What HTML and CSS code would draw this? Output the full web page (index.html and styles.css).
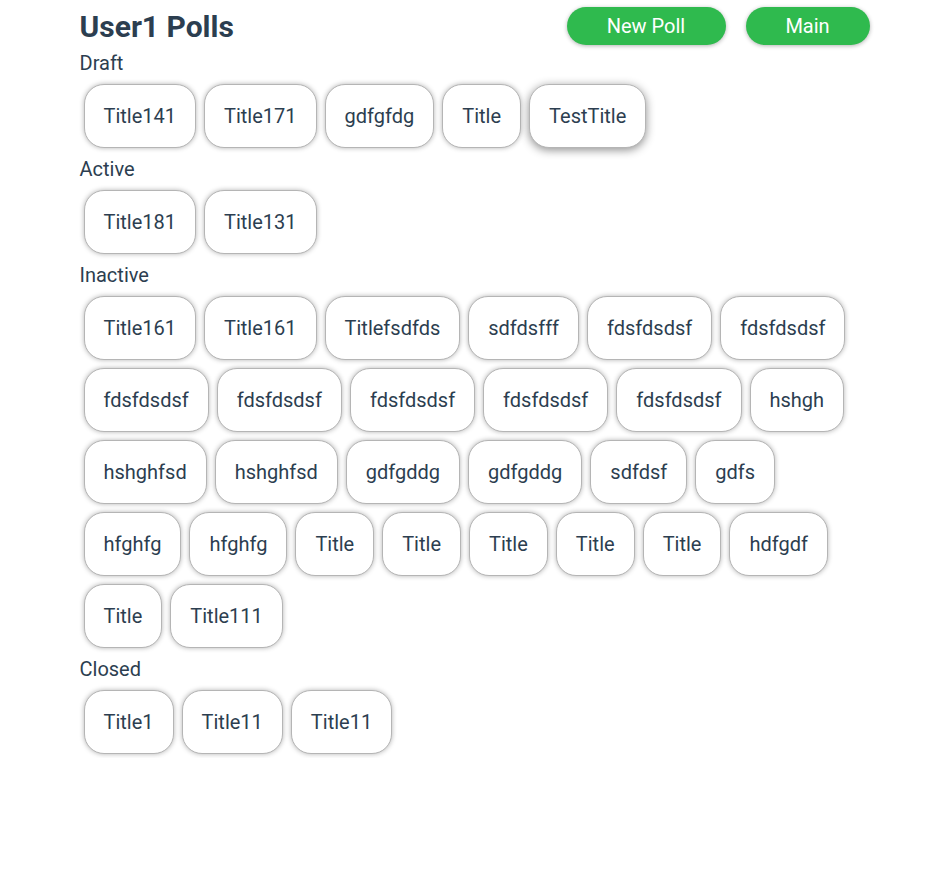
FILE: index.html
```html
<!DOCTYPE html>
<html>
<head>
<meta charset="utf-8">
<link rel="stylesheet" href="styles.css">
</head>
<body>
<div class="container">
  <header class="header">
    <h1 class="title">User1 Polls</h1>
    <div class="actions">
      <button class="btn btn-new">New Poll</button>
      <button class="btn btn-main">Main</button>
    </div>
  </header>

  <section class="group">
    <div class="label">Draft</div>
    <div class="cards">
      <div class="card">Title141</div>
      <div class="card">Title171</div>
      <div class="card">gdfgfdg</div>
      <div class="card">Title</div>
      <div class="card hover">TestTitle</div>
    </div>
  </section>

  <section class="group">
    <div class="label">Active</div>
    <div class="cards">
      <div class="card">Title181</div>
      <div class="card">Title131</div>
    </div>
  </section>

  <section class="group">
    <div class="label">Inactive</div>
    <div class="cards">
      <div class="card">Title161</div>
      <div class="card">Title161</div>
      <div class="card">Titlefsdfds</div>
      <div class="card">sdfdsfff</div>
      <div class="card">fdsfdsdsf</div>
      <div class="card">fdsfdsdsf</div>
      <div class="card">fdsfdsdsf</div>
      <div class="card">fdsfdsdsf</div>
      <div class="card">fdsfdsdsf</div>
      <div class="card">fdsfdsdsf</div>
      <div class="card">fdsfdsdsf</div>
      <div class="card">hshgh</div>
      <div class="card">hshghfsd</div>
      <div class="card">hshghfsd</div>
      <div class="card">gdfgddg</div>
      <div class="card">gdfgddg</div>
      <div class="card">sdfdsf</div>
      <div class="card">gdfs</div>
      <div class="card">hfghfg</div>
      <div class="card">hfghfg</div>
      <div class="card">Title</div>
      <div class="card">Title</div>
      <div class="card">Title</div>
      <div class="card">Title</div>
      <div class="card">Title</div>
      <div class="card">hdfgdf</div>
      <div class="card">Title</div>
      <div class="card">Title111</div>
    </div>
  </section>

  <section class="group">
    <div class="label">Closed</div>
    <div class="cards">
      <div class="card">Title1</div>
      <div class="card">Title11</div>
      <div class="card">Title11</div>
    </div>
  </section>
</div>
</body>
</html>
```

FILE: styles.css
```css
* { box-sizing: border-box; }
body {
  margin: 0;
  font-family: Roboto, "Liberation Sans", sans-serif;
  color: #2c3e50;
  background: #fff;
}
.container {
  width: 790px;
  margin: 0 auto;
}
.header {
  height: 52px;
  display: flex;
  align-items: center;
  justify-content: space-between;
  padding: 4px 0;
}
.title {
  margin: 0;
  font-size: 30px;
  font-weight: 700;
  line-height: 36px;
  padding-top: 2px;
}
.actions {
  display: flex;
  gap: 20px;
}
.btn {
  height: 38px;
  border: none;
  border-radius: 19px;
  background: #2fba4e;
  color: #fff;
  font-family: Roboto, "Liberation Sans", sans-serif;
  font-size: 20px;
  box-shadow: 0 1px 4px rgba(0,0,0,0.3);
}
.btn-new { width: 159px; }
.btn-main { width: 124px; }
.label {
  font-size: 20px;
  line-height: 22px;
  padding: 6px 0 6px;
}
.header + .group .label { padding-top: 0; }
.cards {
  display: flex;
  flex-wrap: wrap;
}
.card {
  margin: 4px;
  height: 64px;
  padding: 0 19px;
  display: flex;
  align-items: center;
  font-size: 20px;
  border: 1px solid #b5b5b5;
  border-radius: 20px;
  box-shadow: 0 0 5px rgba(0,0,0,0.3);
  background: #fff;
}
.card.hover {
  box-shadow: 0 2px 10px rgba(0,0,0,0.45);
}
```
